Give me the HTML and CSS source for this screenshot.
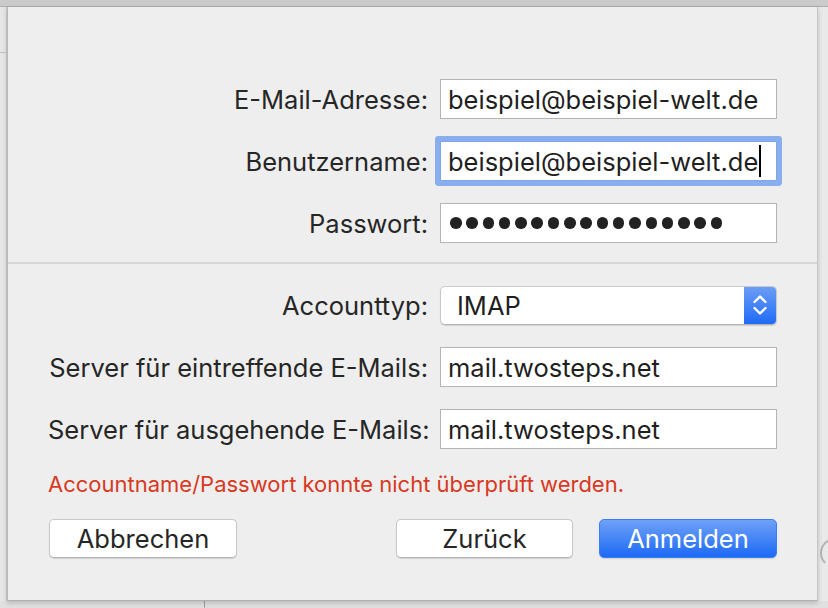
FILE: index.html
```html
<!DOCTYPE html>
<html lang="de">
<head>
<meta charset="utf-8">
<title>Account</title>
<link rel="stylesheet" href="styles.css">
</head>
<body>
<div class="screen">
  <div class="topbar"></div>
  <div class="middle">
    <div class="left-strip"><div class="ls-top"></div></div>
    <div class="sheet">
      <div class="form-grid">
        <label class="label">E-Mail-Adresse:</label>
        <div class="field"><span class="value">beispiel@beispiel-welt.de</span></div>
        <label class="label">Benutzername:</label>
        <div class="field focused"><span class="value">beispiel@beispiel-welt.de</span><span class="caret"></span></div>
        <label class="label">Passwort:</label>
        <div class="field dots">
          <span class="dot"></span><span class="dot"></span><span class="dot"></span><span class="dot"></span><span class="dot"></span><span class="dot"></span><span class="dot"></span><span class="dot"></span><span class="dot"></span><span class="dot"></span><span class="dot"></span><span class="dot"></span><span class="dot"></span><span class="dot"></span><span class="dot"></span><span class="dot"></span><span class="dot"></span>
        </div>
      </div>
      <div class="divider"></div>
      <div class="form-grid second">
        <label class="label">Accounttyp:</label>
        <div class="popup">
          <span class="popup-value">IMAP</span>
          <span class="stepper">
            <svg width="16" height="26" viewBox="0 0 16 26" aria-hidden="true">
              <path d="M2.5 10 L8 4.5 L13.5 10" fill="none" stroke="#fff" stroke-width="2.4" stroke-linecap="round" stroke-linejoin="round"/>
              <path d="M2.5 16 L8 21.5 L13.5 16" fill="none" stroke="#fff" stroke-width="2.4" stroke-linecap="round" stroke-linejoin="round"/>
            </svg>
          </span>
        </div>
        <label class="label">Server für eintreffende E-Mails:</label>
        <div class="field"><span class="value">mail.twosteps.net</span></div>
        <label class="label">Server für ausgehende E-Mails:</label>
        <div class="field"><span class="value">mail.twosteps.net</span></div>
      </div>
      <p class="error">Accountname/Passwort konnte nicht überprüft werden.</p>
      <div class="buttons">
        <button class="btn cancel">Abbrechen</button>
        <div class="btn-group">
          <button class="btn back">Zurück</button>
          <button class="btn primary">Anmelden</button>
        </div>
      </div>
    </div>
    <div class="right-strip"><div class="arc"></div></div>
  </div>
  <div class="bottom-strip"><div class="bs-left"></div><div class="bs-right"></div></div>
</div>
</body>
</html>
```
FILE: styles.css
```css
* { box-sizing: border-box; }
html, body { margin: 0; padding: 0; }
body {
  width: 828px;
  height: 608px;
  overflow: hidden;
  background: #e3e3e3;
  font-family: "Inter", "Liberation Sans", sans-serif;
  color: #262626;
}
.screen { display: flex; flex-direction: column; width: 828px; height: 608px; }
.topbar {
  height: 7px;
  flex: none;
  background: #cbcbcb;
  border-bottom: 1px solid #adadad;
}
.middle { display: flex; height: 594px; flex: none; }
.left-strip {
  width: 7px;
  flex: none;
  background: #e6e6e6;
  border-right: 1px solid #cfcfcf;
}
.ls-top { height: 46px; border-bottom: 1px solid #c2c2c2; }
.sheet {
  width: 811px;
  flex: none;
  background: #eeeeee;
  border-left: 1px solid #b9b9b9;
  border-right: 1px solid #c4c4c4;
  border-bottom: 1px solid #b0b0b0;
  box-shadow: 0 2px 5px rgba(0,0,0,0.18);
  padding: 72px 40px 0 40px;
  position: relative;
  z-index: 1;
}
.right-strip {
  flex: 1;
  background: #e9e9e9;
  position: relative;
  overflow: hidden;
}
.arc {
  position: absolute;
  left: 2px;
  top: 531px;
  width: 30px;
  height: 30px;
  border: 2px solid #b4b4b4;
  border-radius: 50%;
  border-right-color: transparent;
  border-bottom-color: transparent;
}
.bottom-strip { flex: 1; display: flex; background: #e0e0e0; }
.bs-left { width: 205px; border-right: 1px solid #9e9e9e; }
.bs-right { flex: 1; }

.form-grid {
  display: grid;
  grid-template-columns: 380px 337px;
  column-gap: 12px;
  row-gap: 22px;
  grid-auto-rows: 40px;
  align-items: center;
}
.label {
  text-align: right;
  font-size: 25.5px;
  color: #262626;
  white-space: nowrap;
}
.field {
  height: 40px;
  background: #fff;
  border: 1px solid #b4b4b4;
  display: flex;
  align-items: center;
  padding-left: 7px;
  font-size: 25.5px;
  color: #1f1f1f;
  white-space: nowrap;
}
.field.focused {
  border-color: #7ea6ea;
  box-shadow: 0 0 0 5px #89aeee;
  border-radius: 1px;
}
.caret {
  width: 2px;
  height: 32px;
  background: #000;
  margin-left: 1px;
}
.field.dots { gap: 4.8px; padding-left: 9px; }
.dot {
  width: 11.5px;
  height: 11.5px;
  border-radius: 50%;
  background: #222;
  flex: none;
}
.divider {
  height: 2px;
  background: #d7d7d7;
  margin: 19px -40px 0 -40px;
}
.form-grid.second { margin-top: 21px; }
.popup {
  height: 39px;
  background: #fff;
  border: 1px solid #c9c9c9;
  border-bottom-color: #b3b3b3;
  border-radius: 5px;
  box-shadow: 0 1px 1px rgba(0,0,0,0.12);
  display: flex;
  align-items: center;
  overflow: hidden;
  font-size: 25.5px;
  color: #1f1f1f;
}
.popup-value { flex: 1; padding-left: 16px; }
.stepper {
  width: 32px;
  height: 100%;
  background: linear-gradient(#6c9df6, #1f6bf5);
  display: flex;
  align-items: center;
  justify-content: center;
}
.stepper svg { display: block; }
.error {
  margin: 22px 0 0 0;
  font-size: 22px;
  line-height: 26px;
  color: #d8391f;
  white-space: nowrap;
}
.buttons {
  margin-top: 22px;
  padding-left: 1px;
  display: flex;
  justify-content: space-between;
}
.btn-group { display: flex; gap: 26px; }
.btn {
  font-family: inherit;
  font-size: 25.5px;
  height: 39px;
  border-radius: 5px;
  border: 1px solid #c8c8c8;
  border-bottom-color: #b6b6b6;
  background: #fff;
  color: #262626;
  box-shadow: 0 1px 1px rgba(0,0,0,0.12);
  padding: 0;
}
.btn.cancel { width: 188px; }
.btn.back { width: 177px; }
.btn.primary {
  width: 178px;
  color: #fff;
  border: 1px solid #3b7ef3;
  background: linear-gradient(#6fa1f7, #1c6af5);
}
```
